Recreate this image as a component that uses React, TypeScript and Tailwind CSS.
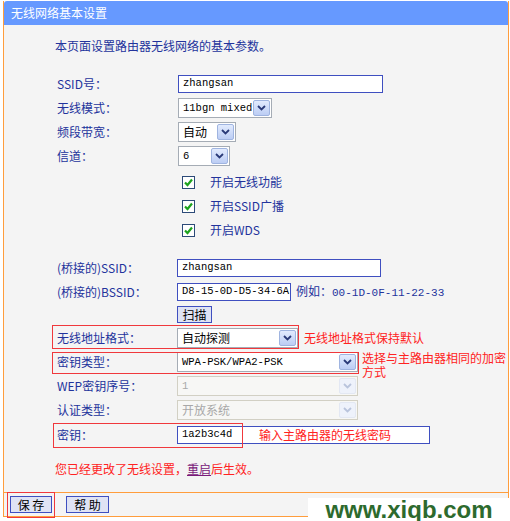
import React from "react";

const cjk = { fontFamily: '"Noto Sans CJK SC", "Liberation Sans", sans-serif' };
const mono = { fontFamily: '"Liberation Mono", "Noto Sans CJK SC", monospace' };

const Chevron = ({ muted }: { muted?: boolean }) => (
  <svg width="9" height="6" viewBox="0 0 9 6">
    <path d="M1 1 L4.5 4.5 L8 1" fill="none" stroke={muted ? "#b9c4dc" : "#2a3a78"} strokeWidth="1.8" />
  </svg>
);

const Select = ({ w, text, disabled, monoText }: { w: string; text: string; disabled?: boolean; monoText?: boolean }) => (
  <div
    className={`${w} h-[20px] flex items-stretch border ${disabled ? "border-[#d2d0c4] bg-[#f7f7f5]" : "border-[#a5acb5] bg-white"}`}
  >
    <span
      className={`flex-1 min-w-0 flex items-center pl-[4px] leading-none whitespace-nowrap overflow-hidden ${disabled ? "text-[#a8a8a8]" : "text-black"} ${monoText ? "text-[10.5px]" : "text-[12px]"}`}
      style={monoText ? mono : cjk}
    >
      {text}
    </span>
    <span
      className={`w-[17px] shrink-0 m-[1px] flex items-center justify-center border rounded-[2px] ${disabled ? "border-[#e3e8f3] bg-[#eef2fb]" : "border-[#9fb4e0] bg-gradient-to-b from-[#e2ebfe] to-[#bccdf4]"}`}
    >
      <Chevron muted={disabled} />
    </span>
  </div>
);

const Input = ({ w, text }: { w: string; text: string }) => (
  <div className={`${w} h-[18px] border border-[#3f4fc0] bg-white flex items-center pl-[4px] text-[10.5px] text-black whitespace-nowrap`} style={mono}>
    {text}
  </div>
);

const Check = () => (
  <span className="w-[13px] h-[13px] border border-[#2c4a78] bg-white flex items-center justify-center">
    <svg width="11" height="11" viewBox="0 0 11 11">
      <path d="M2 5.5 L4.5 8 L9 2.5" fill="none" stroke="#1ea31e" strokeWidth="2.2" />
    </svg>
  </span>
);

const Row = ({ label, h, children, extra }: { label?: string; h: string; children?: React.ReactNode; extra?: React.ReactNode }) => (
  <div className={`relative flex items-center ${h}`}>
    <div className="w-[173px] shrink-0 pl-[53px] text-[12px] text-[#23339c]">{label}</div>
    {children}
    {extra}
  </div>
);

const Btn = ({ text, w }: { text: string; w: string }) => (
  <button
    className={`${w} h-[17px] border border-[#3f4fc0] bg-[#dfe3f4] text-[12px] leading-none text-black flex items-center justify-center`}
    style={cjk}
  >
    {text}
  </button>
);

export default function App() {
  return (
    <div className="relative w-[510px] h-[521px] bg-white overflow-hidden" style={cjk}>
      <div className="ml-[3px] mt-[1px] w-[506px] border-x border-b border-[#ff9d3c]">
        <div className="h-[24px] bg-[#6699ff] rounded-t-[3px] flex items-center pl-[7px] text-[12px] text-white">
          无线网络基本设置
        </div>
        <div className="bg-[#f4f4f4] pt-[13px] pb-[2px]">
          <div className="h-[16px] pl-[51px] flex items-center text-[12px] text-[#23339c]">本页面设置路由器无线网络的基本参数。</div>
          <div className="h-[18px]" />
          <Row label="SSID号：" h="h-[24px]">
            <div className="ml-[1px]">
              <Input w="w-[205px]" text="zhangsan" />
            </div>
          </Row>
          <Row label="无线模式：" h="h-[24px]">
            <div className="ml-[1px]">
              <Select w="w-[94px]" text="11bgn mixed" monoText />
            </div>
          </Row>
          <Row label="频段带宽：" h="h-[24px]">
            <div className="ml-[1px]">
              <Select w="w-[58px]" text="自动" />
            </div>
          </Row>
          <Row label="信道：" h="h-[24px]">
            <div className="ml-[1px]">
              <Select w="w-[52px]" text="6" monoText />
            </div>
          </Row>
          <div className="h-[2px]" />
          {["开启无线功能", "开启SSID广播", "开启WDS"].map((t) => (
            <Row key={t} h="h-[24px]">
              <div className="flex items-center ml-[5px] gap-[15px]">
                <Check />
                <span className="text-[12px] text-[#23339c]">{t}</span>
              </div>
            </Row>
          ))}
          <div className="h-[14px]" />
          <Row label="(桥接的)SSID：" h="h-[24px]">
            <Input w="w-[204px]" text="zhangsan" />
          </Row>
          <Row label="(桥接的)BSSID：" h="h-[24px]">
            <Input w="w-[114px]" text="D8-15-0D-D5-34-6A" />
            <span className="ml-[5px] text-[12px] text-[#23339c]">
              例如：<span className="text-[11px]" style={mono}>00-1D-0F-11-22-33</span>
            </span>
          </Row>
          <Row h="h-[21px]">
            <Btn text="扫描" w="w-[35px]" />
          </Row>
          <Row
            label="无线地址格式："
            h="h-[25px]"
            extra={<div className="absolute left-[48px] top-0 w-[247px] h-[24px] border border-[#f0383c] pointer-events-none" />}
          >
            <Select w="w-[121px]" text="自动探测" />
            <span className="ml-[6px] text-[12px] text-[#ff2222]">无线地址格式保持默认</span>
          </Row>
          <Row
            label="密钥类型："
            h="h-[24px]"
            extra={<div className="absolute left-[48px] top-[2px] w-[307px] h-[22px] border border-[#f0383c] pointer-events-none" />}
          >
            <Select w="w-[181px]" text="WPA-PSK/WPA2-PSK" monoText />
            <span className="self-start mt-[1px] ml-[4px] w-[146px] text-[12px] leading-[14px] text-[#ff2222]">选择与主路由器相同的加密方式</span>
          </Row>
          <Row label="WEP密钥序号：" h="h-[24px]">
            <Select w="w-[181px]" text="1" disabled monoText />
          </Row>
          <Row label="认证类型：" h="h-[24px]">
            <Select w="w-[181px]" text="开放系统" disabled />
          </Row>
          <Row
            label="密钥："
            h="h-[26px]"
            extra={<div className="absolute left-[49px] top-[1px] w-[190px] h-[25px] border border-[#f0383c] pointer-events-none" />}
          >
            <div className="w-[253px] h-[18px] border border-[#3f4fc0] bg-white flex items-center pl-[4px]">
              <span className="w-[77px] text-[10.5px] text-black" style={mono}>1a2b3c4d</span>
              <span className="text-[12px] text-[#ff2222]">输入主路由器的无线密码</span>
            </div>
          </Row>
          <div className="h-[42px] pl-[51px] flex items-center text-[12px] text-[#ff2222]">
            您已经更改了无线设置，<span className="underline text-[#7a1a7a]">重启</span>后生效。
          </div>
        </div>
        <div className="relative h-[24px] border-t border-[#ff9d3c] bg-[#f4f4f4] flex items-center pl-[6px] gap-[14px]">
          <div className="absolute left-[3px] top-[-1px] w-[48px] h-[26px] border border-[#f0383c] pointer-events-none" />
          <Btn text="保 存" w="w-[42px]" />
          <Btn text="帮 助" w="w-[43px]" />
        </div>
      </div>
      <div className="absolute left-[308px] top-[498px] w-[202px] h-[23px] bg-white flex items-center justify-center">
        <span className="text-[24px] font-bold leading-none text-[#2d6a2d]" style={{ fontFamily: '"Liberation Sans", Arial, sans-serif' }}>
          www.xiqb.com
        </span>
      </div>
    </div>
  );
}
